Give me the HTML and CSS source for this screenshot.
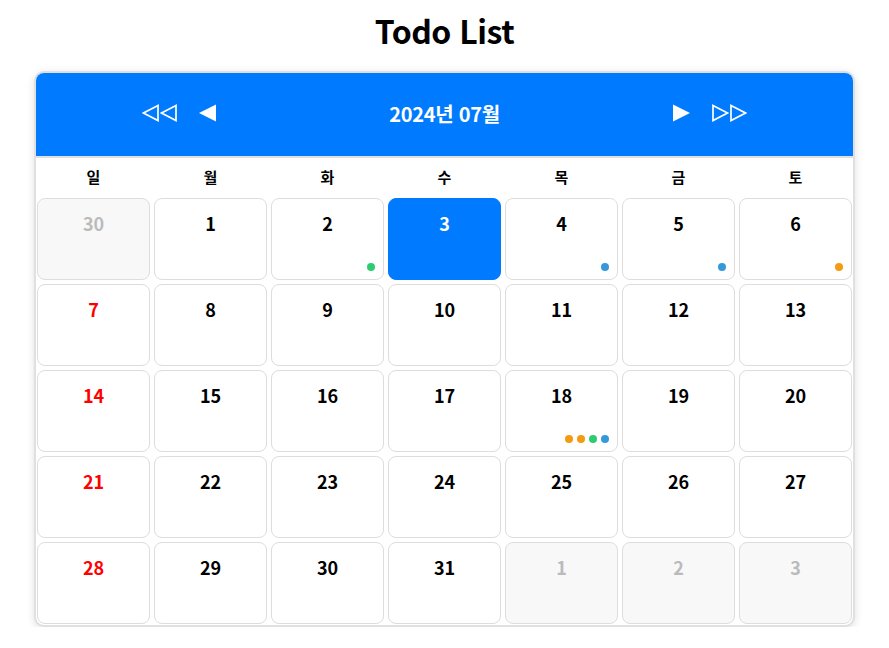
FILE: index.html
```html
<!DOCTYPE html>
<html lang="ko">
<head>
<meta charset="utf-8">
<title>Todo List</title>
<link rel="stylesheet" href="styles.css">
</head>
<body>
<h1 class="title">Todo List</h1>
<div class="calendar">
  <div class="cal-header">
    <div class="nav">
      <button class="nav-btn" aria-label="이전 해">
        <svg width="36" height="18" viewBox="0 0 36 18"><path d="M16 1.5 L1.5 9 L16 16.5 Z M34 1.5 L19.5 9 L34 16.5 Z" fill="none" stroke="#fff" stroke-width="1.7" stroke-linejoin="miter"/></svg>
      </button>
      <button class="nav-btn" aria-label="이전 달">
        <svg width="17" height="18" viewBox="0 0 17 18"><path d="M17 0.5 L0 9 L17 17.5 Z" fill="#fff"/></svg>
      </button>
    </div>
    <div class="month">2024년 07월</div>
    <div class="nav">
      <button class="nav-btn" aria-label="다음 달">
        <svg width="17" height="18" viewBox="0 0 17 18"><path d="M0 0.5 L17 9 L0 17.5 Z" fill="#fff"/></svg>
      </button>
      <button class="nav-btn" aria-label="다음 해">
        <svg width="36" height="18" viewBox="0 0 36 18"><path d="M2 1.5 L16.5 9 L2 16.5 Z M20 1.5 L34.5 9 L20 16.5 Z" fill="none" stroke="#fff" stroke-width="1.7" stroke-linejoin="miter"/></svg>
      </button>
    </div>
  </div>
  <div class="weekdays">
    <div>일</div><div>월</div><div>화</div><div>수</div><div>목</div><div>금</div><div>토</div>
  </div>
  <div class="days">
    <div class="day other"><span class="num">30</span></div>
    <div class="day"><span class="num">1</span></div>
    <div class="day"><span class="num">2</span><div class="dots"><i class="dot green"></i></div></div>
    <div class="day today"><span class="num">3</span></div>
    <div class="day"><span class="num">4</span><div class="dots"><i class="dot blue"></i></div></div>
    <div class="day"><span class="num">5</span><div class="dots"><i class="dot blue"></i></div></div>
    <div class="day"><span class="num">6</span><div class="dots"><i class="dot orange"></i></div></div>

    <div class="day sun"><span class="num">7</span></div>
    <div class="day"><span class="num">8</span></div>
    <div class="day"><span class="num">9</span></div>
    <div class="day"><span class="num">10</span></div>
    <div class="day"><span class="num">11</span></div>
    <div class="day"><span class="num">12</span></div>
    <div class="day"><span class="num">13</span></div>

    <div class="day sun"><span class="num">14</span></div>
    <div class="day"><span class="num">15</span></div>
    <div class="day"><span class="num">16</span></div>
    <div class="day"><span class="num">17</span></div>
    <div class="day"><span class="num">18</span><div class="dots"><i class="dot orange"></i><i class="dot orange"></i><i class="dot green"></i><i class="dot blue"></i></div></div>
    <div class="day"><span class="num">19</span></div>
    <div class="day"><span class="num">20</span></div>

    <div class="day sun"><span class="num">21</span></div>
    <div class="day"><span class="num">22</span></div>
    <div class="day"><span class="num">23</span></div>
    <div class="day"><span class="num">24</span></div>
    <div class="day"><span class="num">25</span></div>
    <div class="day"><span class="num">26</span></div>
    <div class="day"><span class="num">27</span></div>

    <div class="day sun"><span class="num">28</span></div>
    <div class="day"><span class="num">29</span></div>
    <div class="day"><span class="num">30</span></div>
    <div class="day"><span class="num">31</span></div>
    <div class="day other"><span class="num">1</span></div>
    <div class="day other"><span class="num">2</span></div>
    <div class="day other"><span class="num">3</span></div>
  </div>
</div>
</body>
</html>
```

FILE: styles.css
```css
* { box-sizing: border-box; }
body {
  margin: 0;
  background: #fff;
  font-family: "Noto Sans CJK KR", "Noto Sans", sans-serif;
  color: #000;
}
.title {
  margin: 11px 0 22px;
  text-align: center;
  font-size: 32px;
  line-height: 38px;
  font-weight: 700;
  letter-spacing: -0.5px;
}
.calendar {
  width: 821px;
  margin: 0 auto;
  border: 2px solid #e0e0e0;
  border-radius: 10px;
  background: #fff;
  box-shadow: 0 2px 8px rgba(0, 0, 0, 0.12);
  overflow: hidden;
}
.cal-header {
  height: 85px;
  padding-bottom: 3px;
  background: #007bff;
  border-bottom: 2px solid #e0e0e0;
  display: flex;
  align-items: center;
  justify-content: center;
  gap: 170px;
  color: #fff;
}
.nav {
  display: flex;
  align-items: center;
  gap: 21px;
}
.nav-btn {
  background: none;
  border: 0;
  padding: 0;
  display: flex;
  cursor: pointer;
}
.month {
  width: 117px;
  text-align: center;
  font-size: 20px;
  font-weight: 700;
  letter-spacing: -0.3px;
  white-space: nowrap;
}
.weekdays {
  display: grid;
  grid-template-columns: repeat(7, 1fr);
  gap: 4px;
  padding: 0 1px 3px;
  height: 40px;
  align-items: center;
  text-align: center;
  font-size: 15px;
  font-weight: 700;
}
.days {
  display: grid;
  grid-template-columns: repeat(7, 1fr);
  grid-auto-rows: 82px;
  gap: 4px;
  padding: 0 1px 1px;
}
.day {
  position: relative;
  border: 1px solid #ddd;
  border-radius: 8px;
  background: #fff;
  display: flex;
  justify-content: center;
  padding-top: 12px;
}
.num {
  font-size: 18px;
  font-weight: 700;
  line-height: 24px;
  height: 24px;
}
.day.other { background: #f8f8f8; color: #bbb; }
.day.sun { color: #ff0000; }
.day.today { background: #007bff; border-color: #007bff; color: #fff; }
.dots {
  position: absolute;
  right: 8px;
  bottom: 8px;
  display: flex;
  gap: 4px;
}
.dot {
  width: 8px;
  height: 8px;
  border-radius: 50%;
}
.dot.green { background: #2ecc71; }
.dot.blue { background: #3498db; }
.dot.orange { background: #f39c12; }
```
